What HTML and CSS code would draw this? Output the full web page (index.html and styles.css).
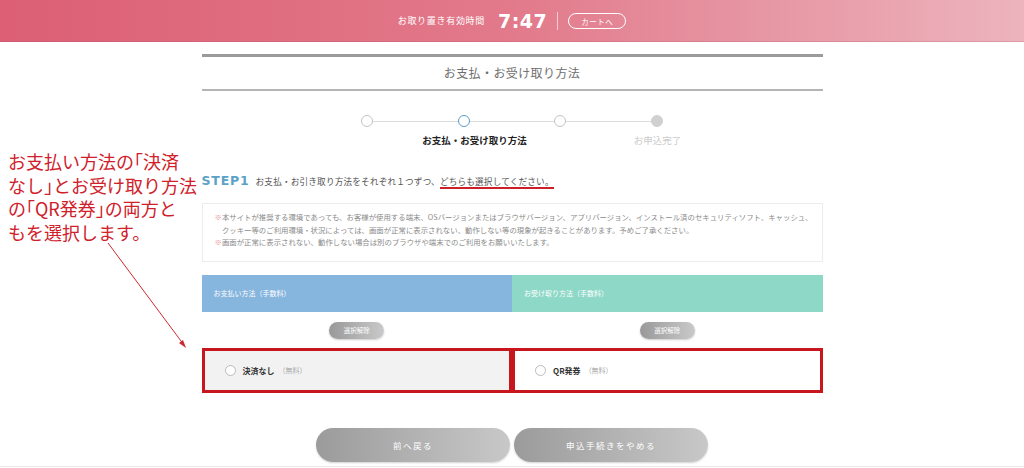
FILE: index.html
```html
<!DOCTYPE html>
<html lang="ja">
<head>
    <meta charset="UTF-8">
    <meta name="viewport" content="width=device-width, initial-scale=1.0">
    <title>お支払・お受け取り方法</title>
    <link rel="stylesheet" href="styles.css">
</head>
<body>

<header class="timer-bar">
    <span class="timer-label">お取り置き有効時間</span>
    <span class="timer-value">7:47</span>
    <span class="timer-sep"></span>
    <a class="cart-link" href="#">カートへ</a>
</header>

<main class="container">
    <h1 class="page-title">お支払・お受け取り方法</h1>

    <div class="stepper">
        <span class="step-dot"></span>
        <span class="step-line"></span>
        <span class="step-dot current"></span>
        <span class="step-line"></span>
        <span class="step-dot"></span>
        <span class="step-line"></span>
        <span class="step-dot done"></span>
    </div>
    <div class="step-labels">
        <span></span>
        <span class="step-label current">お支払・お受け取り方法</span>
        <span></span>
        <span class="step-label">お申込完了</span>
    </div>

    <p class="step-lead">
        <span class="step-no">STEP1</span>
        お支払・お引き取り方法をそれぞれ１つずつ、<span class="mark">どちらも選択してください。</span>
    </p>

    <div class="notice">
        <p><span class="kome">※</span>本サイトが推奨する環境であっても、お客様が使用する端末、OSバージョンまたはブラウザバージョン、アプリバージョン、インストール済のセキュリティソフト、キャッシュ、<br>クッキー等のご利用環境・状況によっては、画面が正常に表示されない、動作しない等の現象が起きることがあります。予めご了承ください。</p>
        <p><span class="kome">※</span>画面が正常に表示されない、動作しない場合は別のブラウザや端末でのご利用をお願いいたします。</p>
    </div>

    <div class="methods">
        <section class="method">
            <h2 class="method-head pay">お支払い方法（手数料）</h2>
            <button class="clear-btn">選択解除</button>
            <label class="option selected">
                <span class="radio"></span>
                <span class="option-name">決済なし</span>
                <span class="option-fee">（無料）</span>
            </label>
        </section>
        <section class="method">
            <h2 class="method-head receive">お受け取り方法（手数料）</h2>
            <button class="clear-btn">選択解除</button>
            <label class="option">
                <span class="radio"></span>
                <span class="option-name">QR発券</span>
                <span class="option-fee">（無料）</span>
            </label>
        </section>
    </div>

    <div class="nav-buttons">
        <button class="nav-btn">前へ戻る</button>
        <button class="nav-btn">申込手続きをやめる</button>
    </div>
</main>

<div class="page-end"></div>

<!-- annotation overlay -->
<div class="annotation">お支払い方法の<span class="bk">「</span>決済<br>なし<span class="bk">」</span>とお受け取り方法<br>の<span class="bk">「</span>QR発券<span class="bk">」</span>の両方と<br>もを選択します。</div>
<svg class="annotation-arrow" width="1024" height="468" viewBox="0 0 1024 468">
    <line x1="108" y1="243" x2="184" y2="345" stroke="#cc2a30" stroke-width="1"/>
    <path d="M186 348 L179 343 L183 340 Z" fill="#cc2a30"/>
</svg>

</body>
</html>
```

FILE: styles.css
```css
body {
    margin: 0;
    font-family: "Noto Sans CJK JP", "Noto Sans", sans-serif;
    color: #333;
    background: #fff;
}
.timer-bar {
    height: 42px;
    display: flex;
    align-items: center;
    justify-content: center;
    background: linear-gradient(90deg, #dc5f74 0%, #e27a8b 50%, #ecb4bd 100%);
    border-bottom: 1px solid rgba(180, 80, 100, 0.25);
    box-sizing: border-box;
    color: #fff;
}
.timer-label {
    font-size: 9px;
    letter-spacing: 0.7px;
    margin-right: 13px;
}
.timer-value {
    font-family: "DejaVu Sans", sans-serif;
    font-weight: bold;
    font-size: 19px;
    letter-spacing: 0.5px;
}
.timer-sep {
    width: 1px;
    height: 18px;
    background: rgba(255,255,255,0.6);
    margin: 0 10px 0 10px;
}
.cart-link {
    color: #fff;
    text-decoration: none;
    font-size: 7.5px;
    border: 1px solid #fff;
    border-radius: 9px;
    height: 16px;
    line-height: 15px;
    box-sizing: border-box;
    padding: 0 12px;
    letter-spacing: 0.5px;
}
.container {
    width: 621px;
    margin: 12px auto 0;
}
.page-title {
    margin: 0;
    border-top: 3px solid #9b9b9b;
    border-bottom: 2px solid #b5b5b5;
    line-height: 32px;
    text-align: center;
    font-size: 12px;
    font-weight: normal;
    color: #6e6e6e;
    letter-spacing: 0.4px;
}
.stepper {
    width: 302px;
    margin: 24px auto 0;
    display: flex;
    align-items: center;
}
.step-dot {
    width: 12px;
    height: 12px;
    box-sizing: border-box;
    border: 1px solid #c4c4c4;
    border-radius: 50%;
    background: #fff;
}
.step-dot.current {
    border: 1.5px solid #5a9dc4;
}
.step-dot.done {
    background: #d0d0d0;
    border-color: #d0d0d0;
}
.step-line {
    flex: 1;
    height: 1px;
    background: #dcdcdc;
}
.step-labels {
    width: 388px;
    margin: 7px auto 0;
    display: grid;
    grid-template-columns: repeat(4, 97px);
    line-height: 12px;
}
.step-label {
    justify-self: center;
    white-space: nowrap;
    font-size: 9.5px;
    color: #ccc;
}
.step-label.current {
    color: #222;
    font-weight: bold;
    padding-left: 22px;
}
.step-lead {
    margin: 26px 0 0;
    line-height: 18px;
    font-size: 8.6px;
    color: #555;
    letter-spacing: 0.2px;
}
.step-no {
    font-family: "DejaVu Sans", sans-serif;
    font-weight: bold;
    font-size: 12.5px;
    color: #5aa2c8;
    letter-spacing: 0.8px;
    margin-right: 4px;
}
.mark {
    border-bottom: 2px solid #cc1f28;
}
.notice {
    margin-top: 13px;
    border: 1px solid #ececec;
    padding: 7px 6px 12px 12px;
    font-size: 7.4px;
    line-height: 12.5px;
    color: #8a8a8a;
}
.notice p {
    margin: 0;
    padding-left: 1em;
    text-indent: -1em;
    white-space: nowrap;
}
.kome {
    color: #e58a92;
}
.methods {
    margin-top: 13px;
    display: grid;
    grid-template-columns: 1fr 1fr;
}
.method {
    display: flex;
    flex-direction: column;
    align-items: center;
}
.method-head {
    align-self: stretch;
    margin: 0;
    height: 37px;
    line-height: 37px;
    padding-left: 12px;
    font-size: 7px;
    font-weight: normal;
    color: #fff;
}
.method-head.pay {
    background: #86b5de;
}
.method-head.receive {
    background: #8ed8c7;
}
.clear-btn {
    margin-top: 10px;
    width: 55px;
    height: 17px;
    border: none;
    border-radius: 9px;
    background: linear-gradient(90deg, #999 0%, #c9c9c9 100%);
    box-shadow: 0 1px 2px rgba(0,0,0,0.2);
    color: #fff;
    font-family: inherit;
    font-size: 6.5px;
    padding: 0;
}
.option {
    align-self: stretch;
    margin-top: 9px;
    height: 45px;
    box-sizing: border-box;
    border: 3px solid #c8161e;
    display: flex;
    align-items: center;
    padding-left: 20px;
    background: #fff;
}
.option.selected {
    background: #f2f2f2;
}
.radio {
    width: 11px;
    height: 11px;
    box-sizing: border-box;
    border: 1px solid #bbb;
    border-radius: 50%;
    background: #fff;
    margin-right: 7px;
}
.option-name {
    font-size: 8px;
    font-weight: bold;
    color: #333;
}
.option-fee {
    font-size: 7px;
    color: #aaa;
    margin-left: 4px;
}
.nav-buttons {
    margin-top: 35px;
    display: flex;
    justify-content: center;
    gap: 4px;
}
.nav-btn {
    width: 194px;
    height: 34px;
    border: none;
    border-radius: 17px;
    background: linear-gradient(90deg, #9b9b9b 0%, #c8c8c8 100%);
    box-shadow: 0 1px 2px rgba(0,0,0,0.18);
    color: #fff;
    font-family: inherit;
    font-size: 8.5px;
    letter-spacing: 1.5px;
}
.page-end {
    margin-top: 4px;
    border-top: 1px solid #e8e8e8;
}
.annotation {
    position: absolute;
    left: 8px;
    top: 150px;
    font-size: 18px;
    line-height: 23.5px;
    color: #d0212b;
    white-space: nowrap;
}
.annotation .bk {
    font-feature-settings: "halt";
}
.annotation-arrow {
    position: absolute;
    left: 0;
    top: 0;
    pointer-events: none;
}
```
